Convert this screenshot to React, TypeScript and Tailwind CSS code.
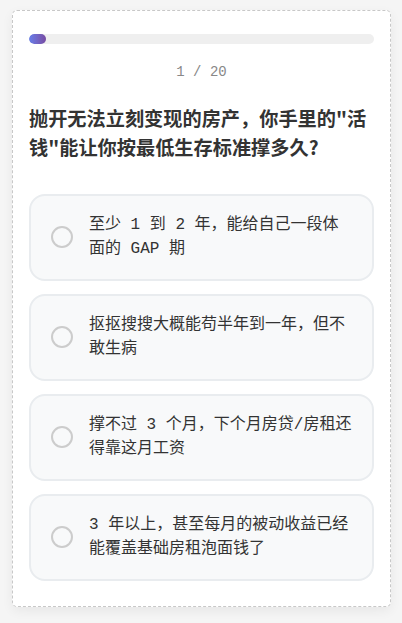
const options = [
  "至少 1 到 2 年，能给自己一段体面的 GAP 期",
  "抠抠搜搜大概能苟半年到一年，但不敢生病",
  "撑不过 3 个月，下个月房贷/房租还得靠这月工资",
  "3 年以上，甚至每月的被动收益已经能覆盖基础房租泡面钱了",
];

export default function App() {
  const current = 1;
  const total = 20;

  return (
    <div className="min-h-screen bg-[#f5f5f5] pt-[10px] px-[12px] pb-[17px]">
      <div className="w-[379px] bg-white border border-dashed border-[#c8c8c8] rounded-[5px] shadow-[0_4px_12px_rgba(0,0,0,0.06)] px-4 pt-[23px] pb-[25px]">
        {/* Progress */}
        <div className="h-[10px] w-full rounded-full bg-[#efefef] overflow-hidden">
          <div
            className="h-full rounded-full bg-gradient-to-r from-[#667eea] to-[#764ba2]"
            style={{ width: `${(current / total) * 100}%` }}
          />
        </div>
        <p className="mt-[18px] text-center text-[14px] leading-5 text-[#888] font-['Liberation_Mono','Noto_Sans_CJK_SC',monospace]">
          {current} / {total}
        </p>

        {/* Question */}
        <h2 className="mt-[22px] text-[19.2px] leading-[28.8px] font-bold text-[#333] font-['Noto_Sans_CJK_SC',sans-serif]">
          抛开无法立刻变现的房产，你手里的"活钱"能让你按最低生存标准撑多久?
        </h2>

        {/* Options */}
        <div className="mt-[32px] flex flex-col gap-[13px]">
          {options.map((text) => (
            <button
              key={text}
              className="flex items-center gap-4 w-full text-left bg-[#f8f9fa] border-2 border-[#e9ecef] rounded-[16px] px-5 py-[17.5px]"
            >
              <span className="shrink-0 w-[22px] h-[22px] rounded-full border-2 border-[#cccccc]" />
              <span className="text-[16px] leading-6 text-[#333] font-['Liberation_Mono','Noto_Sans_CJK_SC',monospace]">
                {text}
              </span>
            </button>
          ))}
        </div>
      </div>
    </div>
  );
}
